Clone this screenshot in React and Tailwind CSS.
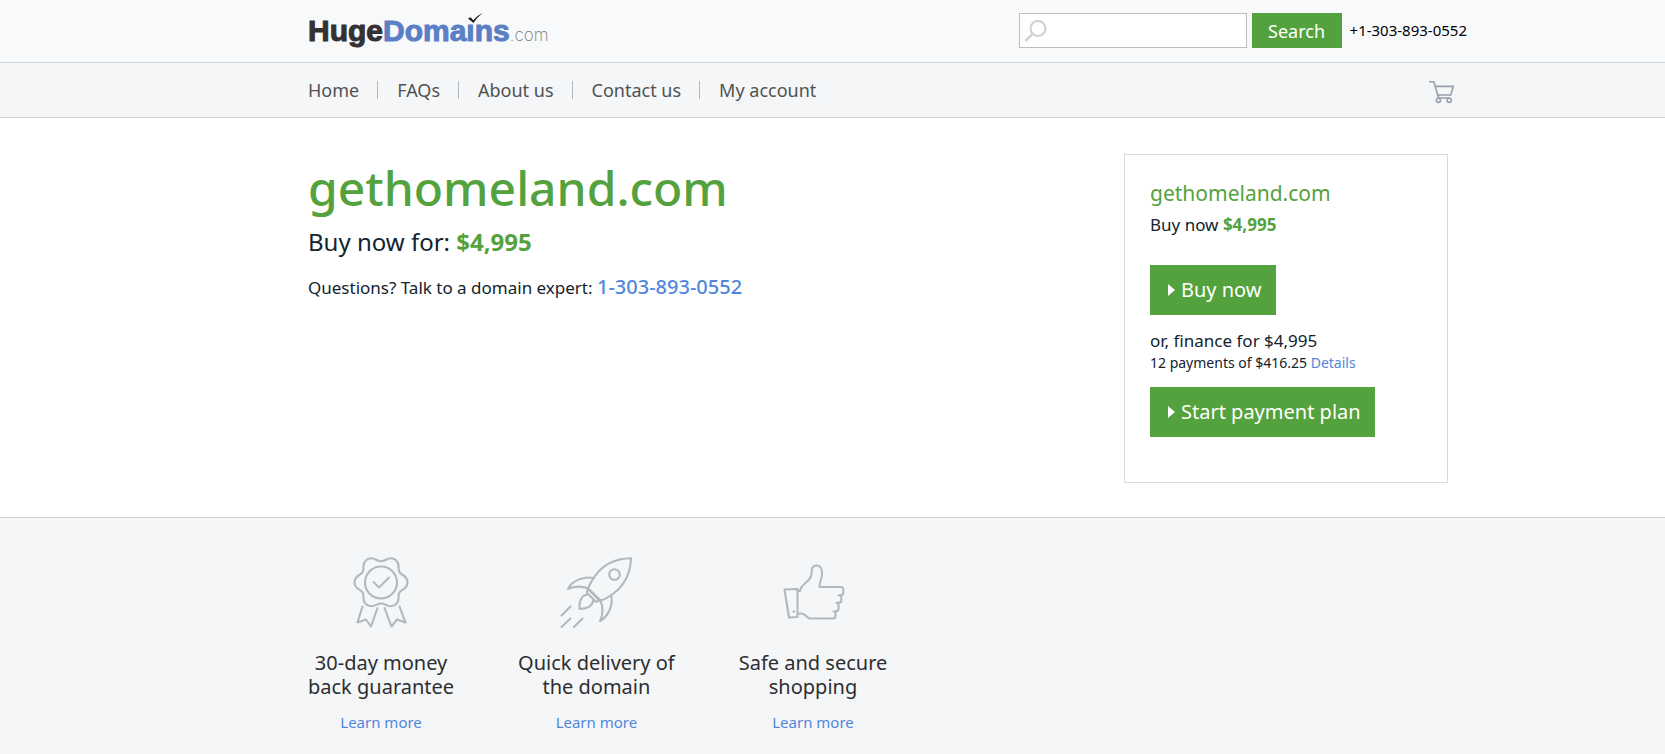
import React from 'react';

const navLinks = ['Home', 'FAQs', 'About us', 'Contact us', 'My account'];

const SearchIcon = () => (
  <svg className="absolute left-1.5 top-1.5 h-6 w-6" viewBox="0 0 24 24" fill="none" stroke="#cfcfcf" strokeWidth="2">
    <circle cx="13" cy="9.5" r="7.5" />
    <path d="M7.5 15 0.5 22" strokeWidth="2.4" />
  </svg>
);

const CartIcon = () => (
  <svg className="h-6 w-[26px]" viewBox="0 0 26 24" fill="none" stroke="#97a0ae" strokeWidth="1.6">
    <path d="M0 1.8h4.8L9.6 18M6 6.4h18.2l-2.4 8.6H8.6M9.6 18h11.6" />
    <circle cx="9.4" cy="20.3" r="2.1" />
    <circle cx="20.2" cy="20.3" r="2.1" />
  </svg>
);

const RibbonIcon = () => (
  <svg className="h-[72px] w-[72px]" viewBox="0 0 72 72" fill="none" stroke="#b0b9bf" strokeWidth="2.1" strokeLinecap="round" strokeLinejoin="round">
    <path d="M36 4.3C40 4.3 42 1.3 45.5 1.3C50 1.3 53.5 4.5 53.5 9C53.5 13 53.5 15.5 57 17.5C60.5 19.5 62.5 21.5 62.5 25.5C62.5 29.5 60 31.5 57 33.2C53.5 35.2 53.5 37.5 53.5 41.5C53.5 46 50 49.2 45.5 49.2C41.5 49.2 40 46.5 36 46.5C32 46.5 30.5 49.2 26.5 49.2C22 49.2 18.5 46 18.5 41.5C18.5 37.5 18.5 35.2 15 33.2C12 31.5 9.5 29.5 9.5 25.5C9.5 21.5 11.5 19.5 15 17.5C18.5 15.5 18.5 13 18.5 9C18.5 4.5 22 1.3 26.5 1.3C30 1.3 32 4.3 36 4.3Z" />
    <circle cx="36" cy="25.5" r="16" />
    <path d="M28.5 25l5.5 5.5 10-10" />
    <path d="M17.5 49.5 12.5 65.5l8.5-3 5 7L32.5 51" />
    <path d="M54.5 49.5 60.5 65.5l-8.5-3-5.5 7L39.5 51" />
  </svg>
);

const RocketIcon = () => (
  <svg className="h-[72px] w-[72px]" viewBox="0 0 72 72" fill="none" stroke="#b0b9bf" strokeWidth="2.1" strokeLinecap="round" strokeLinejoin="round">
    <path d="M71 1.2C55 1.5 43 7.5 35 19C31.5 24 29 29 28 31.2L40.5 43.5C44 42.5 49 40 54 36C65 27.5 70.5 16 71 1.2Z" />
    <circle cx="54.5" cy="17.5" r="5.3" />
    <path d="M28 31.2 26.8 35.8 36 44.8 40.5 43.5M29.5 33.5 38.5 42.5" />
    <path d="M34 21C25 19 12 23 8 32C14 29 21 29 28 31.2" />
    <path d="M51 38C53.5 47 49 59 40 64C43.5 57 43 50 40.5 43.5" />
    <path d="M27 37.5C21 38.5 19 45 19.5 52C26.5 52 32.5 49 33.5 43" />
    <path d="M10.5 49.5 1.5 58.5M10.5 61.5 1.5 70M22.5 61.5 14 70" />
  </svg>
);

const ThumbIcon = () => (
  <svg className="h-[72px] w-[72px]" viewBox="0 0 72 72" fill="none" stroke="#b0b9bf" strokeWidth="2.1" strokeLinejoin="round">
    <path d="M7.5 32.5 20.5 32V60L12 60.5Z" />
    <path d="M20.5 34H23C23.5 30 26 28 28.5 26C33 22.5 34.5 20 34.5 16C34.5 11 36 8.5 39.5 8.5C44 8.5 45.5 13 45 18C44.5 23 42.5 25 42.5 30H64Q66.3 30 66.3 32.5V36.5Q66 38.5 61.5 38.5H64.3V44Q64 46 59.5 46H61.5V52Q61.5 54.5 56.5 54.5H58.5V59Q58.5 61.5 56 61.5H33C30 61.5 29 56.5 24 56.5H20.5" />
    <circle cx="16.8" cy="54.5" r="1.3" fill="#b0b9bf" stroke="none" />
  </svg>
);

const features = [
  { icon: RibbonIcon, lines: ['30-day money', 'back guarantee'] },
  { icon: RocketIcon, lines: ['Quick delivery of', 'the domain'] },
  { icon: ThumbIcon, lines: ['Safe and secure', 'shopping'] },
];

const Logo = () => (
  <a href="#" className="relative flex items-baseline font-['Liberation_Sans',sans-serif] text-[30px] leading-[35px] font-bold">
    <span className="text-[#333132] [-webkit-text-stroke:1px_#333132]">Huge</span>
    <span className="text-[#5a7fc4] [-webkit-text-stroke:1px_#5a7fc4]">Domains</span>
    <span className="font-['Inter',sans-serif] text-[17px] leading-6 font-extralight text-[#777777]">.com</span>
    <svg className="absolute left-[159px] top-0 h-3 w-4" viewBox="0 0 16 12">
      <path d="M0 4h10v7H0z" fill="#f8f9fb" />
      <path d="M1 5.5 3.5 4.3 6.3 7.2Q10 2.5 15.5 0Q10 4.5 6.5 10Z" fill="#1d1d1d" />
    </svg>
  </a>
);

const GreenButton = ({ children }) => (
  <button className="flex h-[50px] items-center gap-1.5 bg-[#54a23d] pl-[18px] pr-3.5 text-xl text-white">
    <svg className="h-3 w-[7px]" viewBox="0 0 7 12">
      <path d="M0 0l7 6-7 6z" fill="#ffffff" />
    </svg>
    {children}
  </button>
);

const App = () => {
  return (
    <div className="flex min-h-screen flex-col bg-white font-['Noto_Sans',sans-serif] text-[#12232e]">
      <header className="border-b border-[#d0d3d7] bg-[#f8f9fb]">
        <div className="mx-auto flex max-w-[1269px] items-center justify-between pb-3.5 pl-[110px] pt-[13px]">
          <Logo />
          <div className="flex items-center">
            <form className="flex gap-[5px]">
              <label className="relative">
                <SearchIcon />
                <input type="text" aria-label="Search domains" className="block h-[35px] w-[228px] border border-[#bcbec0] bg-white pl-9 pr-2 text-base" />
              </label>
              <button type="button" className="h-[35px] w-[90px] bg-[#54a23d] text-lg leading-8 text-white">
                Search
              </button>
            </form>
            <a href="#" className="ml-2 text-[15px] text-black">+1-303-893-0552</a>
          </div>
        </div>
      </header>

      <nav className="border-b border-[#d0d3d7] bg-[#f4f6f8]">
        <div className="mx-auto flex h-[54px] max-w-[1269px] items-center justify-between pl-[110px] pr-3">
          <ul className="flex items-center text-lg text-[#505254]">
            {navLinks.map((link, i) => (
              <li key={link} className="flex items-center">
                {i > 0 && <span className="ml-[18px] mr-[19px] h-[18px] w-px bg-[#b4b7ba]"></span>}
                <a href="#">{link}</a>
              </li>
            ))}
          </ul>
          <a href="#" aria-label="Cart" className="pt-[3px]">
            <CartIcon />
          </a>
        </div>
      </nav>

      <main className="mx-auto flex w-full max-w-[1269px] items-start justify-between pb-[34px] pl-[110px] pr-[19px] pt-9">
        <div className="pt-1">
          <h1 className="text-5xl leading-[60px] font-medium text-[#54a23d]">gethomeland.com</h1>
          <p className="mt-1.5 text-2xl leading-9">
            Buy now for: <strong className="font-bold text-[#54a23d]">$4,995</strong>
          </p>
          <p className="mt-3 text-[17px] leading-8">
            Questions? Talk to a domain expert:{' '}
            <a href="#" className="text-xl font-medium text-[#5087dc]">1-303-893-0552</a>
          </p>
        </div>

        <aside className="flex w-[324px] flex-col items-start border border-[#d8dadf] px-[25px] pb-[45px] pt-[22px] text-[17px]">
          <h2 className="text-[21px] leading-8 text-[#54a23d]">gethomeland.com</h2>
          <p className="mt-1 leading-6">
            Buy now <strong className="font-bold text-[#54a23d]">$4,995</strong>
          </p>
          <div className="mt-7">
            <GreenButton>Buy now</GreenButton>
          </div>
          <p className="mt-3.5 leading-6">or, finance for $4,995</p>
          <p className="text-sm leading-5">
            12 payments of $416.25 <a href="#" className="text-[#5087dc]">Details</a>
          </p>
          <div className="mt-3.5">
            <GreenButton>Start payment plan</GreenButton>
          </div>
        </aside>
      </main>

      <section className="grow border-t border-[#cfd2d9] bg-[#f4f6f8]">
        <div className="mx-auto flex max-w-[1269px] gap-16 pb-4 pl-[110px] pt-[39px]">
          {features.map(({ icon: Icon, lines }) => (
            <div key={lines[0]} className="flex flex-col items-center text-center">
              <Icon />
              <h3 className="mt-[22px] text-xl leading-6 text-[#2e2e30]">
                {lines[0]}
                <br />
                {lines[1]}
              </h3>
              <a href="#" className="mt-[11px] text-[15px] leading-6 text-[#5087dc]">Learn more</a>
            </div>
          ))}
        </div>
      </section>
    </div>
  );
};

export default App;
